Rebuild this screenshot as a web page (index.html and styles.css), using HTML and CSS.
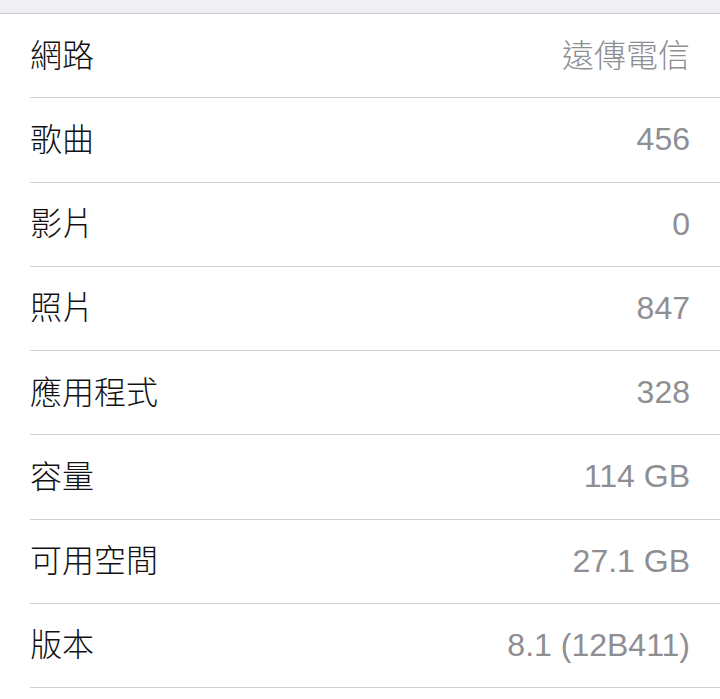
FILE: index.html
```html
<!DOCTYPE html>
<html>
  <head>
    <meta name="viewport" content="width=device-width, initial-scale=1.0" />
    <title>關於本機</title>
    <link rel="stylesheet" href="styles.css">
  </head>
  <body>
    <div class="top-band"></div>
    <ul class="info-list">
      <li class="info-row"><span class="label">網路</span><span class="value cjk">遠傳電信</span></li>
      <li class="info-row"><span class="label">歌曲</span><span class="value">456</span></li>
      <li class="info-row"><span class="label">影片</span><span class="value">0</span></li>
      <li class="info-row"><span class="label">照片</span><span class="value">847</span></li>
      <li class="info-row"><span class="label">應用程式</span><span class="value">328</span></li>
      <li class="info-row"><span class="label">容量</span><span class="value">114 GB</span></li>
      <li class="info-row"><span class="label">可用空間</span><span class="value">27.1 GB</span></li>
      <li class="info-row"><span class="label">版本</span><span class="value">8.1 (12B411)</span></li>
    </ul>
  </body>
</html>
```

FILE: styles.css
```css
body,
html {
  margin: 0;
  padding: 0;
  height: 100%;
  background: #ffffff;
  font-family: "Liberation Sans", "Noto Sans CJK TC", sans-serif;
}

.top-band {
  height: 13px;
  background: #efeff4;
  border-bottom: 1px solid #c8c7cc;
}

.info-list {
  list-style: none;
  margin: 0;
  padding: 0 0 0 30px;
}

/* each row carries its own hairline, inset like iOS cells */
.info-row {
  display: flex;
  align-items: center;
  justify-content: space-between;
  height: 83.25px;
  padding-right: 30px;
  border-bottom: 1px solid #d0d0d4;
  font-size: 32px;
}

.label,
.cjk {
  font-family: "Noto Sans CJK TC", sans-serif;
  font-weight: 300;
  padding-bottom: 6px;
}

.label {
  color: #111111;
}

.value {
  color: #8e8e93;
}
```
